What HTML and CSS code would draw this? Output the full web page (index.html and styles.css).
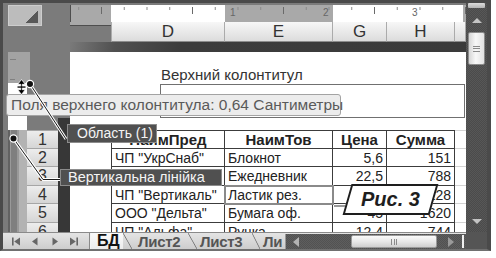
FILE: index.html
```html
<!DOCTYPE html>
<html lang="uk">
<head>
<meta charset="utf-8">
<title>Excel – Разметка страницы</title>
<link rel="stylesheet" href="styles.css">
</head>
<body>
<div class="screen">
  <div class="window">
    <div class="main">
      <div class="corner"><div class="corner-box"><div class="corner-tri"></div></div></div>
      <div class="hruler">
        <span class="rnum n1">1</span>
        <span class="rnum n2">2</span>
        <span class="rnum n3">3</span>
      </div>
      <div class="colheads">
        <div class="ch-spacer"></div>
        <div class="ch w-d first">D</div>
        <div class="ch w-e">E</div>
        <div class="ch w-g">G</div>
        <div class="ch w-h">H</div>
        <div class="ch ch-rest"></div>
      </div>
      <div class="band"></div>
      <div class="gutter">
        <div class="vruler">
          <div class="vr-top"></div>
          <div class="vr-white"></div>
          <div class="vr-low"></div>
        </div>
        <div class="rowheads">
          <div class="rh-space"></div>
          <div class="rh rh-first">1</div>
          <div class="rh rh-s">2</div>
          <div class="rh">3</div>
          <div class="rh rh-s">4</div>
          <div class="rh">5</div>
          <div class="rh">6</div>
        </div>
        <div class="strip"></div>
      </div>
      <div class="page">
        <div class="hdr">
          <div class="hdr-title">Верхний колонтитул</div>
          <div class="hdr-box"></div>
        </div>
        <div class="sheet">
          <div class="c m"></div>
          <div class="c d hd">НаимПред</div>
          <div class="c hd">НаимТов</div>
          <div class="c hd">Цена</div>
          <div class="c hd">Сумма</div>
          <div class="c x"></div>

          <div class="c m"></div>
          <div class="c d">ЧП "УкрСнаб"</div>
          <div class="c">Блокнот</div>
          <div class="c n">5,6</div>
          <div class="c n">151</div>
          <div class="c x"></div>

          <div class="c m"></div>
          <div class="c d">ЧП "Офіс"</div>
          <div class="c">Ежедневник</div>
          <div class="c n">22,5</div>
          <div class="c n">788</div>
          <div class="c x"></div>

          <div class="c m"></div>
          <div class="c d">ЧП "Вертикаль"</div>
          <div class="c sel">Ластик рез.</div>
          <div class="c n">3,2</div>
          <div class="c n">128</div>
          <div class="c x"></div>

          <div class="c m"></div>
          <div class="c d">ООО "Дельта"</div>
          <div class="c">Бумага оф.</div>
          <div class="c n">45</div>
          <div class="c n">1620</div>
          <div class="c x"></div>

          <div class="c m"></div>
          <div class="c d">ЧП "Альфа"</div>
          <div class="c">Ручка</div>
          <div class="c n">12,4</div>
          <div class="c n">744</div>
          <div class="c x"></div>
        </div>
      </div>
    </div>

    <div class="vscroll">
      <div class="vs-split"></div>
      <div class="vs-btn"><span class="tri-up"></span></div>
      <div class="vs-thumb"><span class="grip-h"></span></div>
      <div class="vs-track"></div>
      <div class="vs-btn"><span class="tri-down"></span></div>
    </div>

    <div class="tabbar">
      <div class="nav">
        <span class="navbtn"><svg width="8" height="9" viewBox="0 0 8 9"><rect x="0" y="0.5" width="1.6" height="8" fill="#666"/><polygon points="8,0.5 8,8.5 2.2,4.5" fill="#666"/></svg></span>
        <span class="navbtn"><svg width="8" height="9" viewBox="0 0 8 9"><polygon points="6.5,0.5 6.5,8.5 1,4.5" fill="#666"/></svg></span>
        <span class="navbtn"><svg width="8" height="9" viewBox="0 0 8 9"><polygon points="1.5,0.5 1.5,8.5 7,4.5" fill="#666"/></svg></span>
        <span class="navbtn"><svg width="8" height="9" viewBox="0 0 8 9"><polygon points="0,0.5 0,8.5 5.8,4.5" fill="#666"/><rect x="6.4" y="0.5" width="1.6" height="8" fill="#666"/></svg></span>
      </div>
      <div class="tabdiv"></div>
      <div class="tabs">
        <div class="tab active">БД</div>
        <div class="tsl"></div>
        <div class="tab t2">Лист2</div>
        <div class="tsl"></div>
        <div class="tab t3">Лист3</div>
        <div class="tsl tsl-n"></div>
        <div class="tab t4">Ли</div>
      </div>
      <div class="hscroll">
        <div class="hs-btn hs-left"><span class="tri-left"></span></div>
        <div class="hs-track"></div>
        <div class="hs-thumb"><span class="grip-v"></span></div>
        <div class="hs-gap"></div>
        <div class="hs-btn hs-right"><span class="tri-right"></span></div>
        <div class="hs-split"></div>
      </div>
    </div>
    <div class="corner-br"></div>
  </div>

  <div class="tooltip">Поля верхнего колонтитула: 0,64 Сантиметры</div>

  <svg class="marks" width="496" height="258" viewBox="0 0 496 258">
    <g fill="none" stroke="#fff" stroke-width="3" stroke-linejoin="round">
      <polyline points="30,84 66,139"/>
      <polyline points="13.5,138.5 43,179.5 60,179.5"/>
    </g>
    <g fill="none" stroke="#1a1a1a" stroke-width="1">
      <polyline points="30,84 66,139"/>
      <polyline points="13.5,138.5 43,179.5 60,179.5"/>
    </g>
    <line x1="334" y1="206" x2="346" y2="206" stroke="#777" stroke-width="1.5"/>
    <circle cx="30" cy="84" r="3.6" fill="#111" stroke="#fff" stroke-width="1.2"/>
    <circle cx="13.5" cy="138.5" r="3.6" fill="#111" stroke="#fff" stroke-width="1.2"/>
    <g fill="#000" stroke="#fff" stroke-width="0.8">
      <path d="M21.5 79.5 L25.3 84.3 L22.3 84.3 L22.3 89.7 L25.3 89.7 L21.5 94.5 L17.7 89.7 L20.7 89.7 L20.7 84.3 L17.7 84.3 Z"/>
    </g>
    <rect x="17.5" y="86.4" width="8" height="1.3" fill="#000"/>
  </svg>

  <div class="lbl lbl-area">Область (1)</div>
  <div class="lbl lbl-ruler">Вертикальна лінійка</div>

  <div class="fig"><span>Рис. 3</span></div>
</div>
</body>
</html>
```

FILE: styles.css
```css
* { box-sizing: border-box; margin: 0; padding: 0; }

html, body {
  width: 496px;
  height: 258px;
  overflow: hidden;
  background: #ffffff;
}

body {
  font-family: "Liberation Sans", Arial, sans-serif;
  color: #222;
}

.screen {
  position: relative;
  width: 496px;
  height: 258px;
}

.window {
  width: 491px;
  height: 251px;
  border-style: solid;
  border-color: #4a4a4a;
  border-width: 3px 4px 2px 3px;
  border-bottom-color: #707070;
  background: #7b7b7b;
  display: grid;
  grid-template-columns: 463px 21px;
  grid-template-rows: 229px 17px;
}

/* ---------- main sheet area ---------- */
.main {
  display: grid;
  grid-template-columns: 67px 396px;
  grid-template-rows: 19px 20px 10px 180px;
  background: #7b7b7b;
  overflow: hidden;
}

.corner {
  grid-column: 1;
  grid-row: 1 / 3;
  padding: 2px 0 0 5px;
}

.corner-box {
  width: 34px;
  height: 21px;
  background: #bcbcbc;
  border: 1px solid #cdcdcd;
  display: flex;
  justify-content: flex-end;
  align-items: flex-end;
  padding: 2px 3px;
}

.corner-tri {
  width: 13px;
  height: 12px;
  background: linear-gradient(to bottom right, transparent 50%, #585858 50%);
}

.hruler {
  grid-column: 2;
  grid-row: 1;
  position: relative;
  margin-top: 2px;
  height: 17px;
  border-left: 1px solid #4e4e4e;
  background-image:
    linear-gradient(to right, #6a6a6a 1px, transparent 1px),
    linear-gradient(to right, #8a8a8a 1px, transparent 1px),
    linear-gradient(to right, #a9a9a9 0 40px, #ffffff 40px 154px, #a9a9a9 154px 262px, #ffffff 262px 392px, #a9a9a9 392px);
  background-size: 91px 7px, 22.75px 3px, 100% 100%;
  background-position: 30px 2px, 7.25px 2px, 0 0;
  background-repeat: repeat-x, repeat-x, no-repeat;
}

.rnum {
  position: absolute;
  top: 2px;
  font-size: 10px;
  line-height: 11px;
  color: #666;
}
.n1 { left: 159px; }
.n2 { left: 252px; }
.n3 { left: 341px; }

.colheads {
  grid-column: 2;
  grid-row: 2;
  display: flex;
}

.ch-spacer {
  width: 41px;
  background: linear-gradient(#a9a9a9 0 3px, #4e4e4e 3px 4px, transparent 4px);
}

.ch {
  display: flex;
  align-items: center;
  justify-content: center;
  background: linear-gradient(#f7f7f7, #dcdcdc);
  border-right: 1px solid #ababab;
  border-bottom: 1px solid #8c8c8c;
  font-size: 17px;
  color: #333;
}
.ch.first { border-left: 1px solid #ababab; }
.w-d { width: 114px; }
.w-e { width: 108px; }
.w-g { width: 54px; }
.w-h { width: 68px; }
.ch-rest { flex: 1; }

.band {
  grid-column: 2;
  grid-row: 3;
  background: linear-gradient(100deg, #7a7a7a 0, #505050 45px, #3c3c3c 110px, #3a3a3a 100%);
}

/* left gutter: vertical ruler + row headers */
.gutter {
  grid-column: 1;
  grid-row: 4;
  display: flex;
  padding-left: 5px;
  overflow: hidden;
}

.vruler {
  width: 19px;
  flex-shrink: 0;
  display: flex;
  flex-direction: column;
}

.vr-top {
  height: 31px;
  width: 22px;
  flex-shrink: 0;
  background:
    linear-gradient(#808080, #808080) 2px 7px / 6px 1px no-repeat,
    linear-gradient(#808080, #808080) 2px 27px / 5px 1px no-repeat,
    #a3a3a3;
}

.vr-white {
  height: 47px;
  flex-shrink: 0;
  background: #ffffff;
}

.vr-low {
  flex: 1;
  background:
    linear-gradient(#7f7f7f, #7f7f7f) 3px 8px / 6px 1px repeat-y,
    linear-gradient(to right, #626262 0 2px, #999999 2px 11px, #b3b3b3 11px);
  background-size: 6px 18.5px, 100% 100%;
}

.rowheads {
  width: 31px;
  flex-shrink: 0;
  display: flex;
  flex-direction: column;
}

.rh-space { height: 78px; flex-shrink: 0; }

.rh {
  height: 19px;
  flex-shrink: 0;
  display: flex;
  align-items: center;
  justify-content: center;
  background: linear-gradient(#ededed, #d5d5d5);
  border-bottom: 1px solid #a6a6a6;
  font-size: 16px;
  color: #333;
}
.rh-s { height: 18px; }
.rh-first { border-top: 1px solid #a6a6a6; }

.strip {
  width: 12px;
  flex-shrink: 0;
  background: linear-gradient(transparent 66px, #373737 66px);
}

/* page */
.page {
  grid-column: 2;
  grid-row: 4;
  background: #ffffff;
  overflow: hidden;
  display: flex;
  flex-direction: column;
}

.hdr {
  height: 78px;
  flex-shrink: 0;
  padding: 14px 0 0 90px;
}

.hdr-title {
  font-size: 15px;
  line-height: 17px;
  color: #333;
  padding-left: 1px;
}

.hdr-box {
  margin-top: 1px;
  width: 305px;
  height: 34px;
  border: 1px solid #707070;
}

.sheet {
  display: grid;
  grid-template-columns: 41px 114px 108px 54px 68px 11px;
  grid-template-rows: 19px 18px 19px 18px 19px 19px;
  flex-shrink: 0;
}

.c {
  display: flex;
  align-items: center;
  padding: 0 3px;
  border-right: 1px solid #3c3c3c;
  border-bottom: 1px solid #3c3c3c;
  font-size: 14px;
  color: #222;
  white-space: nowrap;
  overflow: hidden;
}

.c.m { border: none; }
.c.x { border-right: none; border-bottom-color: #d2d2d2; }
.c.d { border-left: 1px solid #3c3c3c; }
.c.hd {
  border-top: 1px solid #3c3c3c;
  justify-content: center;
  font-weight: bold;
  font-size: 15px;
}
.c.x:nth-child(6) { border-top: 1px solid #d2d2d2; }
.c.n { justify-content: flex-end; padding-right: 3px; font-size: 14px; }

.c.sel {
  position: relative;
  overflow: visible;
  outline: 2px solid #8a8a8a;
  outline-offset: -1px;
}

/* ---------- vertical scrollbar ---------- */
.vscroll {
  grid-column: 2;
  grid-row: 1;
  display: flex;
  flex-direction: column;
  background: repeating-conic-gradient(#575757 0 25%, #4b4b4b 0 50%) 0 0 / 2px 2px;
}

.vs-split {
  height: 5px;
  margin: 0 2px 1px;
  background: linear-gradient(#dcdcdc, #b4b4b4);
  border-radius: 1px;
}

.vs-btn {
  height: 22px;
  display: flex;
  align-items: center;
  justify-content: center;
}

.tri-up {
  width: 0; height: 0;
  border-left: 5.5px solid transparent;
  border-right: 5.5px solid transparent;
  border-bottom: 5px solid #c4c4c4;
}
.tri-down {
  width: 0; height: 0;
  border-left: 5.5px solid transparent;
  border-right: 5.5px solid transparent;
  border-top: 5px solid #c4c4c4;
}

.vs-thumb {
  height: 33px;
  margin: 1px 2px 0;
  border: 1px solid #8c8c8c;
  border-radius: 2px;
  background: linear-gradient(to right, #d6d6d6, #f8f8f8 45%, #e2e2e2);
  display: flex;
  align-items: center;
  justify-content: center;
}

.grip-h {
  width: 7px;
  height: 6px;
  background: repeating-linear-gradient(#8a8a8a 0 1px, transparent 1px 2.5px);
}

.vs-track { flex: 1; }

/* ---------- tab bar ---------- */
.tabbar {
  grid-column: 1;
  grid-row: 2;
  display: flex;
  background: linear-gradient(#e4e4e4, #cdcdcd);
  border-top: 1px solid #8a8a8a;
}

.nav {
  width: 86px;
  display: flex;
  align-items: center;
  padding-left: 9px;
}

.navbtn {
  width: 19.5px;
  display: flex;
  align-items: center;
}

.tabdiv {
  width: 2px;
  border-left: 1px solid #8a8a8a;
  border-right: 1px solid #f4f4f4;
}

.tabs {
  width: 194px;
  display: flex;
}

.tab {
  display: flex;
  align-items: center;
  font-weight: bold;
  font-size: 15px;
  letter-spacing: -0.3px;
  color: #555;
  white-space: nowrap;
  overflow: hidden;
}

.tab.active {
  width: 32px;
  padding-left: 6px;
  font-size: 16px;
  color: #111;
  background: linear-gradient(#fafafa, #ececec);
}
.tab.t2 { width: 56px; padding-left: 6px; }
.tab.t3 { width: 55px; padding-left: 3px; }
.tab.t4 { width: 25px; padding-left: 3px; }

.tsl {
  width: 9px;
  flex-shrink: 0;
  background: linear-gradient(to top right, transparent calc(50% - 0.8px), #777 50%, transparent calc(50% + 0.8px));
}
.tsl-n { width: 8px; }

.hscroll {
  flex: 1;
  display: flex;
  margin-top: 1px;
  background: repeating-conic-gradient(#5e5e5e 0 25%, #525252 0 50%) 0 0 / 2px 2px;
  border-left: 1px solid #9a9a9a;
}

.hs-btn {
  display: flex;
  align-items: center;
  justify-content: center;
}
.hs-left { width: 20px; }
.hs-right { width: 16px; }
.hs-track { width: 45px; }
.hs-gap { width: 6px; }

.tri-left {
  width: 0; height: 0;
  border-top: 5px solid transparent;
  border-bottom: 5px solid transparent;
  border-right: 6px solid #b4b4b4;
}
.tri-right {
  width: 0; height: 0;
  border-top: 5px solid transparent;
  border-bottom: 5px solid transparent;
  border-left: 6px solid #9a9a9a;
}

.hs-thumb {
  width: 86px;
  margin: 1px 0;
  border-radius: 2px;
  border: 1px solid #9a9a9a;
  background: linear-gradient(#fafafa, #e6e6e6 55%, #cfcfcf);
  display: flex;
  align-items: center;
  justify-content: center;
}

.grip-v {
  width: 6px;
  height: 6px;
  background: repeating-linear-gradient(to right, #8a8a8a 0 1px, transparent 1px 2.5px);
}

.hs-split {
  width: 2px;
  margin: 1px 2px 1px 3px;
  background: #efefef;
}

.corner-br {
  grid-column: 2;
  grid-row: 2;
  background: #555;
}

/* ---------- overlays ---------- */
.tooltip {
  position: absolute;
  left: 6px;
  top: 94px;
  width: 335px;
  height: 22px;
  padding-left: 4px;
  background: #ececec;
  border: 1px solid #a3a3a3;
  border-radius: 3px;
  font-size: 15.5px;
  line-height: 20px;
  color: #5a5a5a;
  white-space: nowrap;
}

.marks {
  position: absolute;
  left: 0;
  top: 0;
  pointer-events: none;
}

.lbl {
  position: absolute;
  background: #505050;
  color: #f4f4f4;
  border: 1px solid #8c8c8c;
  white-space: nowrap;
}

.lbl-area {
  left: 67px;
  top: 124px;
  width: 90px;
  height: 19px;
  line-height: 17px;
  padding-left: 9px;
  font-size: 14px;
}

.lbl-ruler {
  left: 60px;
  top: 169px;
  width: 162px;
  height: 17px;
  line-height: 15px;
  padding-left: 7px;
  font-size: 14.5px;
}

.fig {
  position: absolute;
  left: 347px;
  top: 184px;
  width: 87px;
  height: 31px;
  border: 2px solid #1e1e1e;
  background: #ffffff;
  transform: skewX(-16deg);
  display: flex;
  align-items: center;
  justify-content: center;
}

.fig span {
  transform: skewX(16deg);
  font-size: 20px;
  font-weight: bold;
  font-style: italic;
  color: #1e1e1e;
}
```
